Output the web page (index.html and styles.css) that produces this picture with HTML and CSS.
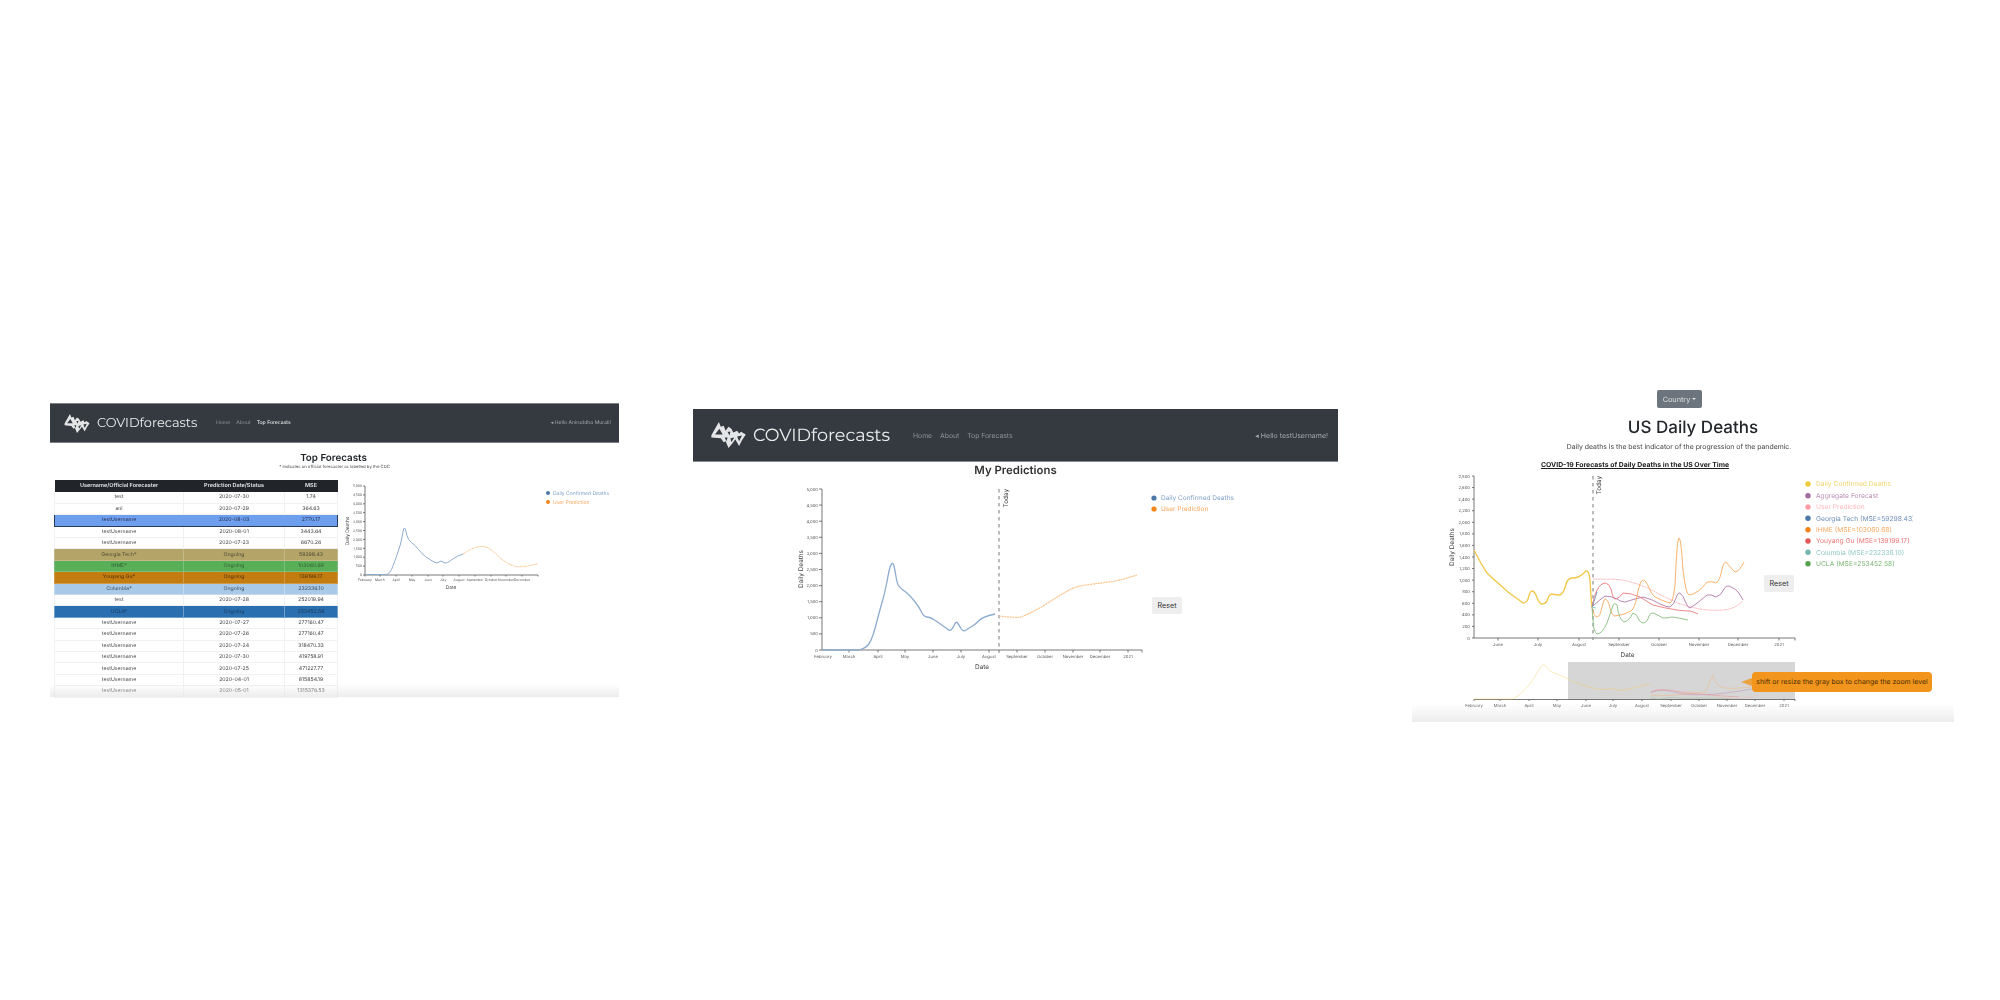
FILE: index.html
```html
<!DOCTYPE html>
<html lang="en">
<head>
<meta charset="utf-8">
<title>COVIDforecasts</title>
<link rel="stylesheet" href="styles.css">
</head>
<body>
<main class="figure">
  <section class="shot shot-a">
    <nav class="navbar nav-a">
      <svg class="logo logo-a" viewBox="0 0 36 27"><use href="#mark"/></svg>
      <span class="brand brand-a">COVIDforecasts</span>
      <span class="links links-a"><span>Home</span><span>About</span><span class="on">Top Forecasts</span></span>
      <span class="hello hello-a">&#9666; Hello Aniruddha Murali!</span>
    </nav>
    <h1 class="title-a">Top Forecasts</h1>
    <p class="note-a">* indicates an official forecaster as labelled by the CDC</p>
    <div class="body-a">
      <table class="board">
        <thead><tr><th>Username/Official Forecaster</th><th>Prediction Date/Status</th><th>MSE</th></tr></thead>
        <tbody>
          <tr><td>test</td><td>2020-07-30</td><td>1.74</td></tr>
          <tr><td>ani</td><td>2020-07-29</td><td>364.63</td></tr>
          <tr class="mine"><td>testUsername</td><td>2020-08-03</td><td>2770.17</td></tr>
          <tr><td>testUsername</td><td>2020-08-01</td><td>3443.64</td></tr>
          <tr><td>testUsername</td><td>2020-07-23</td><td>6670.26</td></tr>
          <tr class="gt"><td>Georgia Tech*</td><td>Ongoing</td><td>59298.43</td></tr>
          <tr class="ihme"><td>IHME*</td><td>Ongoing</td><td>103060.68</td></tr>
          <tr class="yg"><td>Youyang Gu*</td><td>Ongoing</td><td>139199.17</td></tr>
          <tr class="col"><td>Columbia*</td><td>Ongoing</td><td>232336.10</td></tr>
          <tr><td>test</td><td>2020-07-28</td><td>252019.94</td></tr>
          <tr class="ucla"><td>UCLA*</td><td>Ongoing</td><td>253452.58</td></tr>
          <tr><td>testUsername</td><td>2020-07-27</td><td>277160.47</td></tr>
          <tr><td>testUsername</td><td>2020-07-26</td><td>277160.47</td></tr>
          <tr><td>testUsername</td><td>2020-07-24</td><td>318470.33</td></tr>
          <tr><td>testUsername</td><td>2020-07-30</td><td>419758.91</td></tr>
          <tr><td>testUsername</td><td>2020-07-25</td><td>471227.77</td></tr>
          <tr><td>testUsername</td><td>2020-04-01</td><td>815854.19</td></tr>
          <tr><td>testUsername</td><td>2020-05-01</td><td>1315376.53</td></tr>
        </tbody>
      </table>
      <svg class="chart-a" viewBox="0 0 250 125" width="250" height="125">
        <g class="axis">
          <path d="M0 0H-2M0 8.900H-2M0 17.800H-2M0 26.700H-2M0 35.600H-2M0 44.500H-2M0 53.400H-2M0 62.300H-2M0 71.200H-2M0 80.100H-2M0 89H-2M0 0V89H173"/>
          <path d="M0 89v1.500M15 89v1.500M31 89v1.500M47 89v1.500M63 89v1.500M78 89v1.500M94 89v1.500M110 89v1.500M126 89v1.500M141 89v1.500M157 89v1.500M173 89v1.500"/>
        </g>
        <g class="tick ta-e">
          <text x="-3" y="1.200">5,000</text><text x="-3" y="10.100">4,500</text><text x="-3" y="19">4,000</text><text x="-3" y="27.900">3,500</text><text x="-3" y="36.800">3,000</text><text x="-3" y="45.700">2,500</text><text x="-3" y="54.600">2,000</text><text x="-3" y="63.500">1,500</text><text x="-3" y="72.400">1,000</text><text x="-3" y="81.300">500</text><text x="-3" y="90.200">0</text>
        </g>
        <g class="tick ta-m">
          <text x="0" y="94.500">February</text><text x="15" y="94.500">March</text><text x="31" y="94.500">April</text><text x="47" y="94.500">May</text><text x="63" y="94.500">June</text><text x="78" y="94.500">July</text><text x="94" y="94.500">August</text><text x="110" y="94.500">September</text><text x="126" y="94.500">October</text><text x="141" y="94.500">November</text><text x="157" y="94.500">December</text>
        </g>
        <text class="axlabel ta-m" x="86" y="103">Date</text>
        <text class="axlabel ta-m" transform="translate(-16 45) rotate(-90)">Daily Deaths</text>
        <path class="blue thin" d="M0 88.500H22Q25 87 26.500 83.500Q28 80 30 74.500Q32 69 34 63Q36 57 37 51Q38 45 38.700 43Q39.500 41 40.200 43Q41 45 42 49.500Q43 54 46.500 56.500Q50 59 53.500 63.500Q57 68 60.500 70.500Q64 73 68 75.500Q72 78 74 76Q76 74 78 76Q80 78 82.500 76.500Q85 75 88.500 72.500Q92 70 98 68"/>
        <path class="orange thin dot" d="M98 68Q108 61.700 112 61Q116.700 60 121 61Q125 62.300 130 67Q135 72.300 140 75.500Q145 79 151 80.500Q158 81.700 173 77.500"/>
        <g class="leg">
          <circle cx="183" cy="7" r="2" class="f-blue"/><text x="188" y="8.800" class="c-blue">Daily Confirmed Deaths</text>
          <circle cx="183" cy="16" r="2" class="f-orange"/><text x="188" y="17.800" class="c-orange">User Prediction</text>
        </g>
      </svg>
    </div>
    <div class="fade fade-a"></div>
  </section>

  <section class="shot shot-b">
    <nav class="navbar nav-b">
      <svg class="logo logo-b" viewBox="0 0 36 27"><use href="#mark"/></svg>
      <span class="brand brand-b">COVIDforecasts</span>
      <span class="links links-b"><span>Home</span><span>About</span><span>Top Forecasts</span></span>
      <span class="hello hello-b">&#9666; Hello testUsername!</span>
    </nav>
    <h1 class="title-b">My Predictions</h1>
    <div class="body-b">
      <svg class="chart-b" viewBox="0 0 420 200" width="420" height="200">
        <g class="axis">
          <path d="M0 3H-3M0 19.100H-3M0 35.200H-3M0 51.300H-3M0 67.400H-3M0 83.500H-3M0 99.600H-3M0 115.700H-3M0 131.800H-3M0 147.900H-3M0 164H-3M0 3V164H320"/>
          <path d="M27 164v2.500M56 164v2.500M83 164v2.500M111 164v2.500M139 164v2.500M167 164v2.500M195 164v2.500M223 164v2.500M251 164v2.500M278 164v2.500M306 164v2.500M320 164v2.500"/>
        </g>
        <g class="tick ta-e">
          <text x="-4" y="4.500">5,000</text><text x="-4" y="20.600">4,500</text><text x="-4" y="36.700">4,000</text><text x="-4" y="52.800">3,500</text><text x="-4" y="68.900">3,000</text><text x="-4" y="85">2,500</text><text x="-4" y="101.100">2,000</text><text x="-4" y="117.200">1,500</text><text x="-4" y="133.300">1,000</text><text x="-4" y="149.400">500</text><text x="-4" y="165.500">0</text>
        </g>
        <g class="tick ta-m">
          <text x="1" y="171.500">February</text><text x="27" y="171.500">March</text><text x="56" y="171.500">April</text><text x="83" y="171.500">May</text><text x="111" y="171.500">June</text><text x="139" y="171.500">July</text><text x="167" y="171.500">August</text><text x="195" y="171.500">September</text><text x="223" y="171.500">October</text><text x="251" y="171.500">November</text><text x="278" y="171.500">December</text><text x="306" y="171.500">2021</text>
        </g>
        <text class="axlabel2 ta-m" x="160" y="183">Date</text>
        <text class="axlabel2 ta-m" transform="translate(-19 83) rotate(-90)">Daily Deaths</text>
        <path class="today" d="M177 3V167"/>
        <text class="axlabel2 ta-e" transform="translate(186 3) rotate(-90)">Today</text>
        <path class="blue" d="M0 164H37Q44 162 46.500 158.500Q49 155 51 149Q53 143 55 135Q57 127 60 116.500Q63 106 64.500 98Q66 90 67 85Q68 80 69.500 78Q71 76 72 80Q73 84 74 90.500Q75 97 76.500 99.500Q78 102 81 104Q84 106 87 109Q90 112 93.500 116.500Q97 121 99.500 126Q102 131 105 131Q108 131 112.500 134Q117 137 120.500 139.500Q124 142 126 143.500Q128 145 129.500 143.500Q131 142 132.500 138.500Q134 135 135.500 137Q137 139 139 142.500Q141 146 144 144Q147 142 150.500 140Q154 138 157 134.500Q160 131 173 128"/>
        <path class="orange dot" d="M177 130Q190 131.500 198 131.300Q205 129 220 120.700Q235 111 247 104Q255 100 264 99Q278 97 290 95.700Q303 93 315 89"/>
        <g class="leg2">
          <circle cx="332" cy="12" r="2.600" class="f-blue"/><text x="339" y="14.300" class="c-blue">Daily Confirmed Deaths</text>
          <circle cx="332" cy="23" r="2.600" class="f-orange"/><text x="339" y="25.300" class="c-orange">User Prediction</text>
        </g>
      </svg>
      <button class="reset reset-b">Reset</button>
    </div>
  </section>

  <section class="shot shot-c">
    <div class="center"><span class="dropdown">Country <i class="caret"></i></span></div>
    <h1 class="title-c">US Daily Deaths</h1>
    <p class="note-c">Daily deaths is the best indicator of the progression of the pandemic.</p>
    <h2 class="chart-title">COVID-19 Forecasts of Daily Deaths in the US Over Time</h2>
    <div class="body-c">
      <svg class="chart-c" viewBox="0 0 480 240" width="480" height="240">
        <defs><clipPath id="legclip"><rect x="342" y="0" width="96.700" height="100"/></clipPath></defs>
        <g class="axis">
          <path d="M0 2H-2M0 13.570H-2M0 25.140H-2M0 36.710H-2M0 48.290H-2M0 59.860H-2M0 71.430H-2M0 83H-2M0 94.570H-2M0 106.140H-2M0 117.710H-2M0 129.290H-2M0 140.860H-2M0 152.430H-2M0 164H-2M0 2V164H321"/>
          <path d="M24 164v2.500M64 164v2.500M105 164v2.500M145 164v2.500M185 164v2.500M225 164v2.500M264 164v2.500M305 164v2.500M321 164v2.500"/>
        </g>
        <g class="tick ta-e">
          <text x="-4" y="3.500">2,800</text><text x="-4" y="15">2,600</text><text x="-4" y="26.600">2,400</text><text x="-4" y="38.200">2,200</text><text x="-4" y="49.800">2,000</text><text x="-4" y="61.400">1,800</text><text x="-4" y="72.900">1,600</text><text x="-4" y="84.500">1,400</text><text x="-4" y="96.100">1,200</text><text x="-4" y="107.600">1,000</text><text x="-4" y="119.200">800</text><text x="-4" y="130.800">600</text><text x="-4" y="142.400">400</text><text x="-4" y="153.900">200</text><text x="-4" y="165.500">0</text>
        </g>
        <g class="tick ta-m">
          <text x="24" y="171.500">June</text><text x="64" y="171.500">July</text><text x="105" y="171.500">August</text><text x="145" y="171.500">September</text><text x="185" y="171.500">October</text><text x="225" y="171.500">November</text><text x="264" y="171.500">December</text><text x="305" y="171.500">2021</text>
        </g>
        <text class="axlabel2 ta-m" x="153.500" y="183">Date</text>
        <text class="axlabel2 ta-m" transform="translate(-20 73) rotate(-90)">Daily Deaths</text>
        <path class="today thick" d="M119 2V166"/>
        <text class="axlabel2 ta-e" transform="translate(127 2) rotate(-90)">Today</text>
        <path class="l yellow" d="M0 76Q7 90 13 99Q18 104 24 109Q29 113.500 34 118Q37 120.500 41 123Q45 126 49 129Q52 129 54 125Q56 117 58 117Q60 117 62 121Q65 130 68 130Q71 130 73 127Q75 120 78 120Q82 121 86 121Q90 119 92 110Q93 105 98 104Q102 104 104 103Q108 101 110 99Q112 96 113 97Q115 98 116 106Q117 125 118 133"/>
        <path class="l pinkd" d="M119 105L143 105.300Q156 107 166 111Q175 114 183 119Q193 124 203 128.700Q215 133 226 135Q240 137 249 136Q258 135 263 131.700Q267 129 269 127"/>
        <path class="l purple" d="M118 133Q125 126 131 122Q137 122 143 125Q147 128 151 128Q160 125 169 123Q178 125 186 130Q192 133 196 133Q200 131 202 124Q204 118 206 119Q209 121 212 129Q214 134 216 134Q224 129 233 121Q237 120 242 123Q247 122 250 115Q252 111 255 112Q262 115 264 118Q267 122 269 126"/>
        <path class="l red" d="M118 133Q120 122 123 116Q127 109 131 109Q135 109 137 115Q139 125 141 125Q145 125 149 119Q157 119 166 123Q172 127 179 131Q190 134 203 136Q210 137 216 137Q220 138 224 140"/>
        <path class="l orangel" d="M118 133Q120 143 123 143Q126 143 128 133Q130 125 131 125Q134 125 136 134Q138 142 141 142Q150 141 157 137Q161 134 163 122Q166 106 169 106Q172 106 175 114Q178 121 181 123Q188 127 196 129Q199 128 201 112Q203 64 205 64Q207 64 209 96Q212 121 215 121Q224 120 233 108Q238 107 242 109Q246 107 248 95Q250 88 252 88Q255 92 261 98Q265 98 270 88"/>
        <path class="l green" d="M118 133Q119 148 120 155Q122 160 123 160Q128 160 133 149Q137 138 139 131Q141 128 143 131Q145 146 150 148Q155 147 159 139Q163 140 165 146Q167 149 169 149Q173 149 175 142Q177 138 179 139Q184 141 189 144Q194 144 198 143Q206 144 214 146"/>
        <path class="l bluel" d="M118 133Q122 122 123 118"/>
        <path class="l teal" d="M118 133L122 134"/>
        <g class="leg3">
          <circle cx="334" cy="10" r="2.700" class="f-yellow"/><text x="342" y="12.300" class="c-yellow">Daily Confirmed Deaths</text>
          <circle cx="334" cy="21.700" r="2.700" class="f-purple"/><text x="342" y="24" class="c-purple">Aggregate Forecast</text>
          <circle cx="334" cy="33" r="2.700" class="f-pink"/><text x="342" y="35.300" class="c-pink">User Prediction</text>
          <circle cx="334" cy="44.300" r="2.700" class="f-blue"/><text x="342" y="46.600" class="c-blue2" clip-path="url(#legclip)">Georgia Tech (MSE=59298.43)</text>
          <circle cx="334" cy="55.700" r="2.700" class="f-orange"/><text x="342" y="58" class="c-orange">IHME (MSE=103060.68)</text>
          <circle cx="334" cy="67" r="2.700" class="f-red"/><text x="342" y="69.300" class="c-red">Youyang Gu (MSE=139199.17)</text>
          <circle cx="334" cy="78.300" r="2.700" class="f-teal"/><text x="342" y="80.600" class="c-teal">Columbia (MSE=232336.10)</text>
          <circle cx="334" cy="89.700" r="2.700" class="f-green"/><text x="342" y="92" class="c-green">UCLA (MSE=253452.58)</text>
        </g>
        <rect x="94" y="188" width="227" height="37.500" class="brushbox"/>
        <g class="axis">
          <path d="M0 225.500H321M0 225.500v1.500M26 225.500v1.500M55 225.500v1.500M83 225.500v1.500M112 225.500v1.500M139 225.500v1.500M168 225.500v1.500M197 225.500v1.500M225 225.500v1.500M253 225.500v1.500M281 225.500v1.500M310 225.500v1.500M321 225.500v1.500"/>
        </g>
        <path class="l mini yellow" d="M0 225H39Q46 221 51 215.500Q56.500 210 61 202.500Q65 195 67.500 192Q70 189 73 193.500Q75.500 198 81.500 199.500Q87.500 201.500 94 205Q101 209 115 213Q129 217 132.500 215Q136 213.500 139.500 215Q142.600 217 149 216Q156 215 165 212.500Q173.600 209.700 177 211"/>
        <path class="l mini purple" d="M177 219C183 214 198 217 208 220C228 222 250 220 278 215"/>
        <path class="l mini red" d="M177 218C188 213 198 217 213 219C233 221 250 222 265 223"/>
        <path class="l mini orangel" d="M177 221C188 223 198 221 231 218C235 213 237 201 239 202C242 217 255 215 278 213"/>
        <path class="l mini green" d="M177 223C184 228 194 222 203 224C218 225 240 223 260 225"/>
        <path class="l mini pinkd" d="M180 216C203 216 223 219 245 223C260 226 272 224 285 221"/>
        <g class="tick ta-m">
          <text x="0" y="232.500">February</text><text x="26" y="232.500">March</text><text x="55" y="232.500">April</text><text x="83" y="232.500">May</text><text x="112" y="232.500">June</text><text x="139" y="232.500">July</text><text x="168" y="232.500">August</text><text x="197" y="232.500">September</text><text x="225" y="232.500">October</text><text x="253" y="232.500">November</text><text x="281" y="232.500">December</text><text x="310" y="232.500">2021</text>
        </g>
      </svg>
      <button class="reset reset-c">Reset</button>
      <div class="tip"><span class="tip-arrow"></span>shift or resize the gray box to change the zoom level</div>
    </div>
    <div class="fade fade-c"></div>
  </section>
</main>
<svg class="defs" width="0" height="0" aria-hidden="true">
  <symbol id="mark" viewBox="0 0 36 27">
    <path fill="#e4e5e6" d="M0 14 8 0l2 5 3-1 2 5 3-4 3 2 2 4 4-2 2 3 2-2 5 3-4 6-3 6-4-7-2 3-5 6-3-7-2 1-3-4-10-1z"/>
    <path fill="#343a40" d="M4 13 8.500 7 12 13zM17 10l3 0-1 4zM20 17l4-1-3 5zM27 15l5-1-3 6zM14 16l3 0-1 4z"/>
  </symbol>
</svg>
</body>
</html>
```
FILE: styles.css
```css
* { box-sizing: border-box; }
html, body { margin: 0; padding: 0; background: #fff; }
body { width: 2000px; height: 1000px; overflow: hidden; font-family: Inter, "Liberation Sans", sans-serif; color: #212529; text-rendering: geometricPrecision; }
.figure { display: flex; align-items: flex-start; height: 1000px; }
.shot { position: relative; filter: blur(0.45px); flex: none; }
.shot-a { width: 569px; height: 294px; margin: 403px 0 0 50px; }
.shot-b { width: 645px; height: 300px; margin: 409px 0 0 74px; }
.shot-c { width: 542px; height: 332px; margin: 390px 0 0 74px; }
.defs { position: absolute; }

.navbar { display: flex; align-items: center; background: #343a40; color: #fff; }
.nav-a { height: 40px; padding: 0 8px 0 14px; border-top: 1px solid #7c8084; border-bottom: 1px solid #7c8084; }
.nav-b { height: 53px; padding: 0 10px 0 18px; border-bottom: 1px solid #8a8d90; }
.logo { flex: none; }
.logo-a { width: 26px; height: 19px; }
.logo-b { width: 35px; height: 26px; }
.brand { font-family: Montserrat, "Open Sans", "Noto Sans", sans-serif; font-weight: 400; color: #eceded; flex: none; }
.brand-a { font-size: 12.900px; margin-left: 7px; width: 119px; }
.brand-b { font-size: 17.600px; margin-left: 7px; width: 160px; }
.links { display: flex; }
.links-a { gap: 6px; font-size: 5.100px; color: #8f9397; }
.links-a .on { color: #fff; }
.links-b { gap: 8px; font-size: 6.800px; color: #8f9397; }
.hello { margin-left: auto; color: #a5a8aa; }
.hello-a { font-size: 5.100px; }
.hello-b { font-size: 7px; }

h1, h2, p { margin: 0; text-align: center; font-weight: 500; }
.title-a { font-size: 9.800px; line-height: 13px; margin-top: 8.500px; padding-right: 2px; font-weight: 600; }
.note-a { font-size: 4.250px; line-height: 6px; margin-top: .5px; font-weight: 400; color: #444; }
.body-a { display: flex; align-items: flex-start; margin-top: 9px; padding-left: 4px; }
.board { width: 284px; table-layout: fixed; border-collapse: collapse; font-size: 5.200px; color: #444; flex: none; }
.board th:nth-child(1) { width: 129px; }
.board th:nth-child(2) { width: 101px; }
.board th { height: 12px; background: #212529; color: #e4e5e6; font-size: 5.500px; font-weight: 600; padding: 0; text-align: center; }
.board td { height: 11.400px; padding: 0; text-align: center; border: 1px solid #f0f1f2; border-width: 0 1px 1px; line-height: 10px; }
.board tr.mine td { background: #6e9fef; color: #1e2b45; border-top: 1px solid #2b3a55; border-bottom: 1px solid #2b3a55; border-left-color: #6e9fef; border-right-color: #6e9fef; }
.board tr.mine td:first-child { border-left: 1px solid #2b3a55; }
.board tr.mine td:last-child { border-right: 1px solid #2b3a55; }
.board tr.gt td { background: #b4a468; color: #4d4a35; border-color: #c5b88a; }
.board tr.ihme td { background: #59af58; color: #2f5f30; border-color: #7dc07c; }
.board tr.yg td { background: #c27c10; color: #4d3208; border-color: #d09a48; }
.board tr.col td { background: #a9c9e8; color: #3b4a5a; border-color: #c3daf0; }
.board tr.ucla td { background: #2a6fb0; color: #1b3a5a; border-color: #6f9fcc; }
.chart-a { margin: 6px 0 0 27px; flex: none; overflow: visible; }

.title-b { font-size: 11.400px; line-height: 16px; font-weight: 600; color: #333; }
.body-b { position: relative; margin: 0 0 0 129px; padding-top: 8px; }
.chart-b { display: block; overflow: visible; }
.reset { border: 0; background: #eeeeee; color: #333; font-family: Inter, "Liberation Sans", sans-serif; border-radius: 2px; padding: 0; }
.reset-b { position: absolute; left: 330px; top: 119px; width: 30px; height: 17px; font-size: 7.200px; }

.center { display: flex; justify-content: center; padding-right: 7px; }
.dropdown { display: flex; align-items: center; justify-content: center; gap: 2px; width: 45px; height: 18px; background: #6c757d; color: #dfe1e3; border-radius: 2px; font-size: 7.300px; }
.caret { width: 0; height: 0; border: 2.500px solid transparent; border-top-color: #e2e3e4; border-bottom: 0; }
.title-c { font-size: 17px; line-height: 20px; margin-top: 10px; font-weight: 500; color: #23272b; padding-left: 20px; }
.note-c { font-size: 6.900px; line-height: 10px; margin-top: 4px; font-weight: 400; color: #444; padding-right: 8px; }
.chart-title { font-size: 6.900px; line-height: 9px; margin-top: 8px; font-weight: 700; text-decoration: underline; color: #222; padding-right: 96px; }
.body-c { position: relative; margin: 5px 0 0 62px; }
.chart-c { display: block; overflow: visible; }
.reset-c { position: absolute; left: 290px; top: 101px; width: 30px; height: 17px; font-size: 7.200px; }
.tip { position: absolute; left: 278px; top: 197.500px; width: 180px; height: 20.500px; background: #f2951c; color: #4a2c06; border-radius: 4px; font-size: 6.950px; line-height: 20.500px; text-align: center; white-space: nowrap; }
.tip-arrow { position: absolute; left: -11px; top: 6px; width: 0; height: 0; border-style: solid; border-width: 4px 11px 4px 0; border-color: transparent #f2951c transparent transparent; opacity: .8; }

.fade { position: absolute; left: 0; right: 0; bottom: 0; pointer-events: none; background: linear-gradient(to bottom, rgba(230,230,230,0), rgba(230,230,230,.75)); }
.fade-a { height: 13px; }
.fade-c { height: 18px; }

svg text { font-family: Inter, "Liberation Sans", sans-serif; }
.axis path, path.axis { fill: none; stroke: #555; stroke-width: .8; }
.tick { font-size: 3.300px; fill: #555; }
.shot-b .tick, .shot-c .tick { font-size: 4.200px; }
.ta-e { text-anchor: end; }
.ta-m { text-anchor: middle; }
.axlabel { font-size: 4.800px; fill: #444; }
.axlabel2 { font-size: 6.400px; fill: #444; }
.blue { fill: none; stroke: #8eabd0; stroke-width: 1.300; }
.orange { fill: none; stroke: #fbc48d; stroke-width: 1.200; }
.blue.thin, .orange.thin { stroke-width: 1; }
.dot { stroke-dasharray: 2 .6; }
.today { fill: none; stroke: #555; stroke-width: .8; stroke-dasharray: 3.500 3.500; }
.today.thick { stroke: #999; stroke-width: 1.300; }
.l { fill: none; stroke-width: .9; }
.l.yellow { stroke: #f2c94c; stroke-width: 1.400; }
.pinkd { stroke: #fdb0b5; stroke-dasharray: 2 .5; }
.purple { stroke: #b07aa8; }
.red { stroke: #ea7a7c; }
.orangel { stroke: #f9a95c; }
.green { stroke: #86bd80; }
.bluel { stroke: #6f95c2; }
.teal { stroke: #8ac5c2; }
.l.mini { stroke-width: .5; opacity: .75; }
.brushbox { fill: #d6d6d6; }
.leg { font-size: 5px; }
.leg2 { font-size: 6.500px; }
.leg3 { font-size: 6.700px; }
.f-blue { fill: #4c78a8; }
.f-orange { fill: #f58518; }
.f-yellow { fill: #eeca3b; }
.f-purple { fill: #a56b9b; }
.f-pink { fill: #ff9da7; }
.f-red { fill: #e45756; }
.f-teal { fill: #72b7b2; }
.f-green { fill: #54a24b; }
.c-blue { fill: #84a3c8; }
.c-blue2 { fill: #6f8fb8; }
.c-orange { fill: #f8a85e; }
.c-yellow { fill: #f2d56d; }
.c-purple { fill: #b98db2; }
.c-pink { fill: #ffb8bf; }
.c-red { fill: #ea7476; }
.c-teal { fill: #93c8c4; }
.c-green { fill: #7cb974; }
```
